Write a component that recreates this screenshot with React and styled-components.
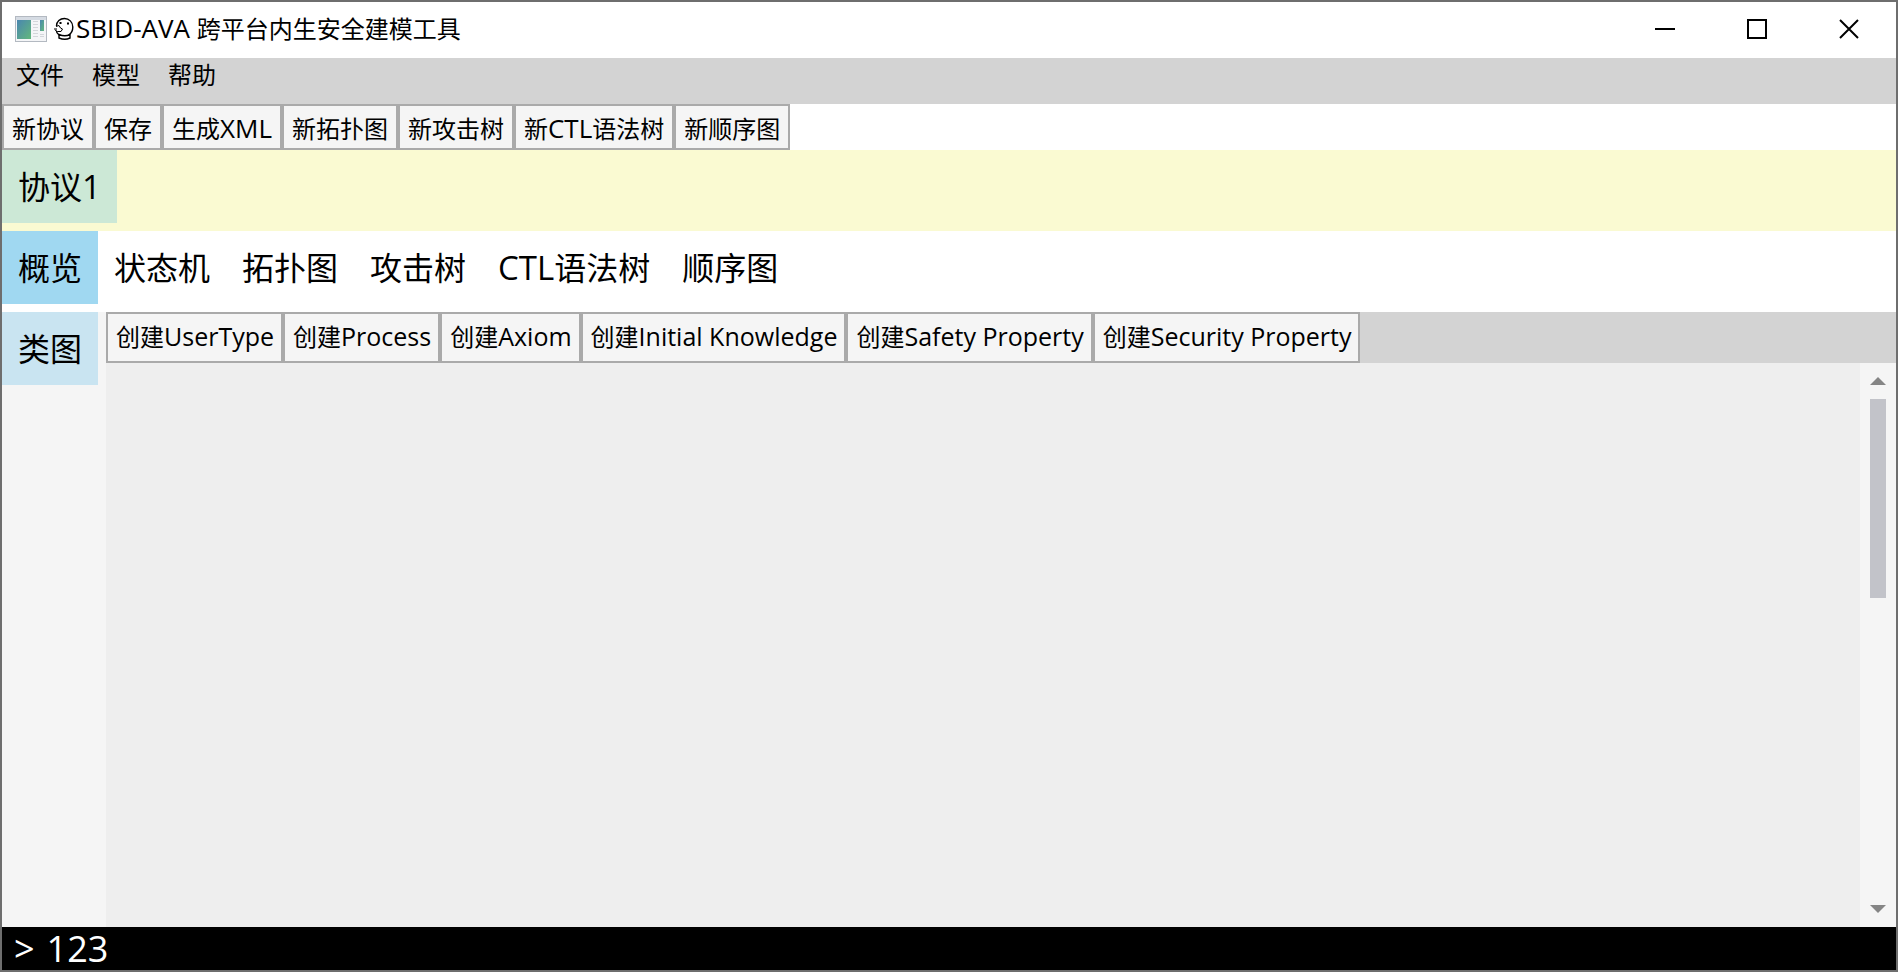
import React from "react";
import styled, { createGlobalStyle } from "styled-components";

const GlobalStyle = createGlobalStyle`
  *, *::before, *::after { box-sizing: border-box; }
  body {
    margin: 0;
    font-family: "Open Sans", "Noto Sans CJK SC", sans-serif;
    font-size: 24px;
    color: #000;
  }
  button, input { font: inherit; color: inherit; }
`;

const Window = styled.div`
  display: flex;
  flex-direction: column;
  min-height: 100vh;
  border: 2px solid #6e6e6e;
  background: #fff;
`;

const TitleBar = styled.header`
  display: flex;
  align-items: center;
  height: 56px;
  padding: 0 1px 2px 13px;
`;

const Title = styled.h1`
  display: flex;
  align-items: center;
  flex: 1;
  margin: 0;
  font-size: 24px;
  line-height: 32px;
  font-weight: 400;
`;

const TitleText = styled.span`
  white-space: pre;
`;

const Latin = styled.span`
  font-size: ${(p) => p.$size}px;
  line-height: 1;
`;

const AppIcon = styled.svg`
  flex: none;
  margin-right: 7px;
`;

const SealIcon = styled.svg`
  flex: none;
  margin-right: 2px;
`;

const WindowButton = styled.button`
  display: flex;
  align-items: center;
  justify-content: center;
  width: 92px;
  height: 54px;
  padding: 0;
  border: 0;
  background: transparent;
`;

const MenuBar = styled.nav`
  display: flex;
  align-items: flex-start;
  height: 46px;
  background: #d3d3d3;
`;

const MenuItem = styled.button`
  height: 34px;
  padding: 0 14px;
  border: 0;
  background: transparent;
  line-height: 34px;
`;

const ToolBar = styled.div`
  display: flex;
  background: ${(p) => (p.$shaded ? "#d3d3d3" : "#fff")};
`;

const ToolButton = styled.button`
  height: ${(p) => (p.$tall ? 51 : 46)}px;
  padding: ${(p) => (p.$tall ? "0 7px 2px 8px" : "4px 8px 0")};
  border: 2px solid #aaa;
  background: #f5f5f5;
  line-height: 32px;
  white-space: nowrap;
`;

const TabStrip = styled.div`
  display: flex;
  align-items: flex-start;
  height: 81px;
  background: ${(p) => p.$color};
`;

const Tab = styled.button`
  height: 73px;
  padding: 0 16px;
  border: 0;
  background: ${(p) => p.$color || "transparent"};
  font-size: 32px;
  line-height: 40px;
  white-space: nowrap;
`;

const Workspace = styled.main`
  display: flex;
  flex: 1;
`;

const SideTabs = styled.aside`
  flex: none;
  width: 104px;
  background: #f5f5f5;
`;

const Editor = styled.section`
  display: flex;
  flex: 1;
  flex-direction: column;
  min-width: 0;
`;

const CanvasArea = styled.div`
  display: flex;
  flex: 1;
`;

const Canvas = styled.div`
  flex: 1;
  background: #eee;
`;

const ScrollBar = styled.div`
  display: flex;
  flex-direction: column;
  align-items: center;
  width: 36px;
  background: #f5f5f5;
`;

const ScrollArrow = styled.button`
  display: flex;
  align-items: center;
  justify-content: center;
  width: 36px;
  height: 36px;
  padding: 0;
  border: 0;
  background: transparent;
`;

const ScrollTrack = styled.div`
  flex: 1;
  width: 16px;
`;

const ScrollThumb = styled.div`
  height: 199px;
  background: #c2c3c9;
`;

const Console = styled.label`
  display: flex;
  align-items: center;
  height: 43px;
  padding-left: 12px;
  background: #000;
  color: #fff;
  font-size: 36px;
  line-height: 43px;
`;

const ConsoleInput = styled.input`
  flex: 1;
  min-width: 0;
  height: 43px;
  margin-left: 12px;
  padding: 0;
  border: 0;
  outline: 0;
  background: transparent;
`;

const menus = ["文件", "模型", "帮助"];
const fileTools = ["新协议", "保存", "生成XML", "新拓扑图", "新攻击树", "新CTL语法树", "新顺序图"];
const views = ["概览", "状态机", "拓扑图", "攻击树", "CTL语法树", "顺序图"];
const createTools = ["创建UserType", "创建Process", "创建Axiom", "创建Initial Knowledge", "创建Safety Property", "创建Security Property"];

// Sets the Latin words of a mixed label slightly larger than the Chinese ones.
function MixedText({ text, size }) {
  return text
    .split(/([A-Za-z0-9][A-Za-z0-9 -]*)/)
    .filter(Boolean)
    .map((part, i) => (/^[A-Za-z0-9]/.test(part) ? <Latin key={i} $size={size}>{part}</Latin> : part));
}

export default function App() {
  return (
    <>
      <GlobalStyle />
      <Window>
        <TitleBar>
          <AppIcon width="32" height="26" viewBox="0 0 32 26" aria-hidden="true">
            <defs>
              <linearGradient id="pane" x1="0" y1="0" x2="1" y2="1">
                <stop offset="0" stopColor="#4a86b0" />
                <stop offset="1" stopColor="#62b87c" />
              </linearGradient>
            </defs>
            <rect x="0.5" y="0.5" width="31" height="25" fill="#f4f5f7" stroke="#b3b9c1" />
            <rect x="1" y="1" width="30" height="3" fill="#d5dbe3" />
            <rect x="2" y="4" width="14" height="19" fill="url(#pane)" />
            <path d="M18 5.500h5M18 8.500h5M18 11.500h5M18 14.500h5M18 17.500h5M18 20.500h5" stroke="#d3d6da" />
            <rect x="25" y="4" width="4" height="11" fill="url(#pane)" />
            <path d="M25 18.500h4M25 20.500h4" stroke="#d3d6da" />
          </AppIcon>
          <Title>
            <SealIcon width="20" height="24" viewBox="0 0 20 24" fill="none" stroke="#000" strokeWidth="1.4" aria-hidden="true">
              <path d="M5 18C3.500 17 2.500 15.500 2.500 14M2.500 9C2.500 4.500 6 1.500 10.500 1.500S18.800 5 18.800 10c0 4-1.500 6.500-4 8" />
              <path d="M5 17.500q6 2.500 11 0v3.500q-5 2.500-11 0z" />
              <path d="M2 9.500l3-1 1.500 2.500 2 1-1.500 2.500H3.500L1 13M0 12h3" strokeWidth="1" />
              <path d="M5.500 6h2M13 6.500h2" strokeWidth="2" />
            </SealIcon>
            <TitleText><MixedText text="SBID-AVA 跨平台内生安全建模工具" size={26} /></TitleText>
          </Title>
          <WindowButton aria-label="最小化">
            <svg width="20" height="20" stroke="#000" strokeWidth="2"><path d="M0 10h20" /></svg>
          </WindowButton>
          <WindowButton aria-label="最大化">
            <svg width="20" height="20" fill="none" stroke="#000" strokeWidth="2"><path d="M1 1h18v18H1z" /></svg>
          </WindowButton>
          <WindowButton aria-label="关闭">
            <svg width="20" height="20" stroke="#000" strokeWidth="2"><path d="M1 1l18 18M19 1L1 19" /></svg>
          </WindowButton>
        </TitleBar>
        <MenuBar>
          {menus.map((m) => <MenuItem key={m}>{m}</MenuItem>)}
        </MenuBar>
        <ToolBar>
          {fileTools.map((t) => <ToolButton key={t}><MixedText text={t} size={26} /></ToolButton>)}
        </ToolBar>
        <TabStrip $color="#fafad2">
          <Tab $color="#cce8d6"><MixedText text="协议1" size={33} /></Tab>
        </TabStrip>
        <TabStrip $color="#fff">
          {views.map((v, i) => (
            <Tab key={v} $color={i === 0 ? "#a0d8f1" : undefined}><MixedText text={v} size={33} /></Tab>
          ))}
        </TabStrip>
        <Workspace>
          <SideTabs>
            <Tab $color="#c9e4f1">类图</Tab>
          </SideTabs>
          <Editor>
            <ToolBar $shaded>
              {createTools.map((t) => <ToolButton key={t} $tall><MixedText text={t} size={25} /></ToolButton>)}
            </ToolBar>
            <CanvasArea>
              <Canvas />
              <ScrollBar>
                <ScrollArrow aria-label="向上滚动">
                  <svg width="16" height="8"><path d="M0 8L8 0l8 8z" fill="#858585" /></svg>
                </ScrollArrow>
                <ScrollTrack><ScrollThumb /></ScrollTrack>
                <ScrollArrow aria-label="向下滚动">
                  <svg width="16" height="8"><path d="M0 0l8 8 8-8z" fill="#858585" /></svg>
                </ScrollArrow>
              </ScrollBar>
            </CanvasArea>
          </Editor>
        </Workspace>
        <Console>
          &gt;
          <ConsoleInput defaultValue="123" />
        </Console>
      </Window>
    </>
  );
}
